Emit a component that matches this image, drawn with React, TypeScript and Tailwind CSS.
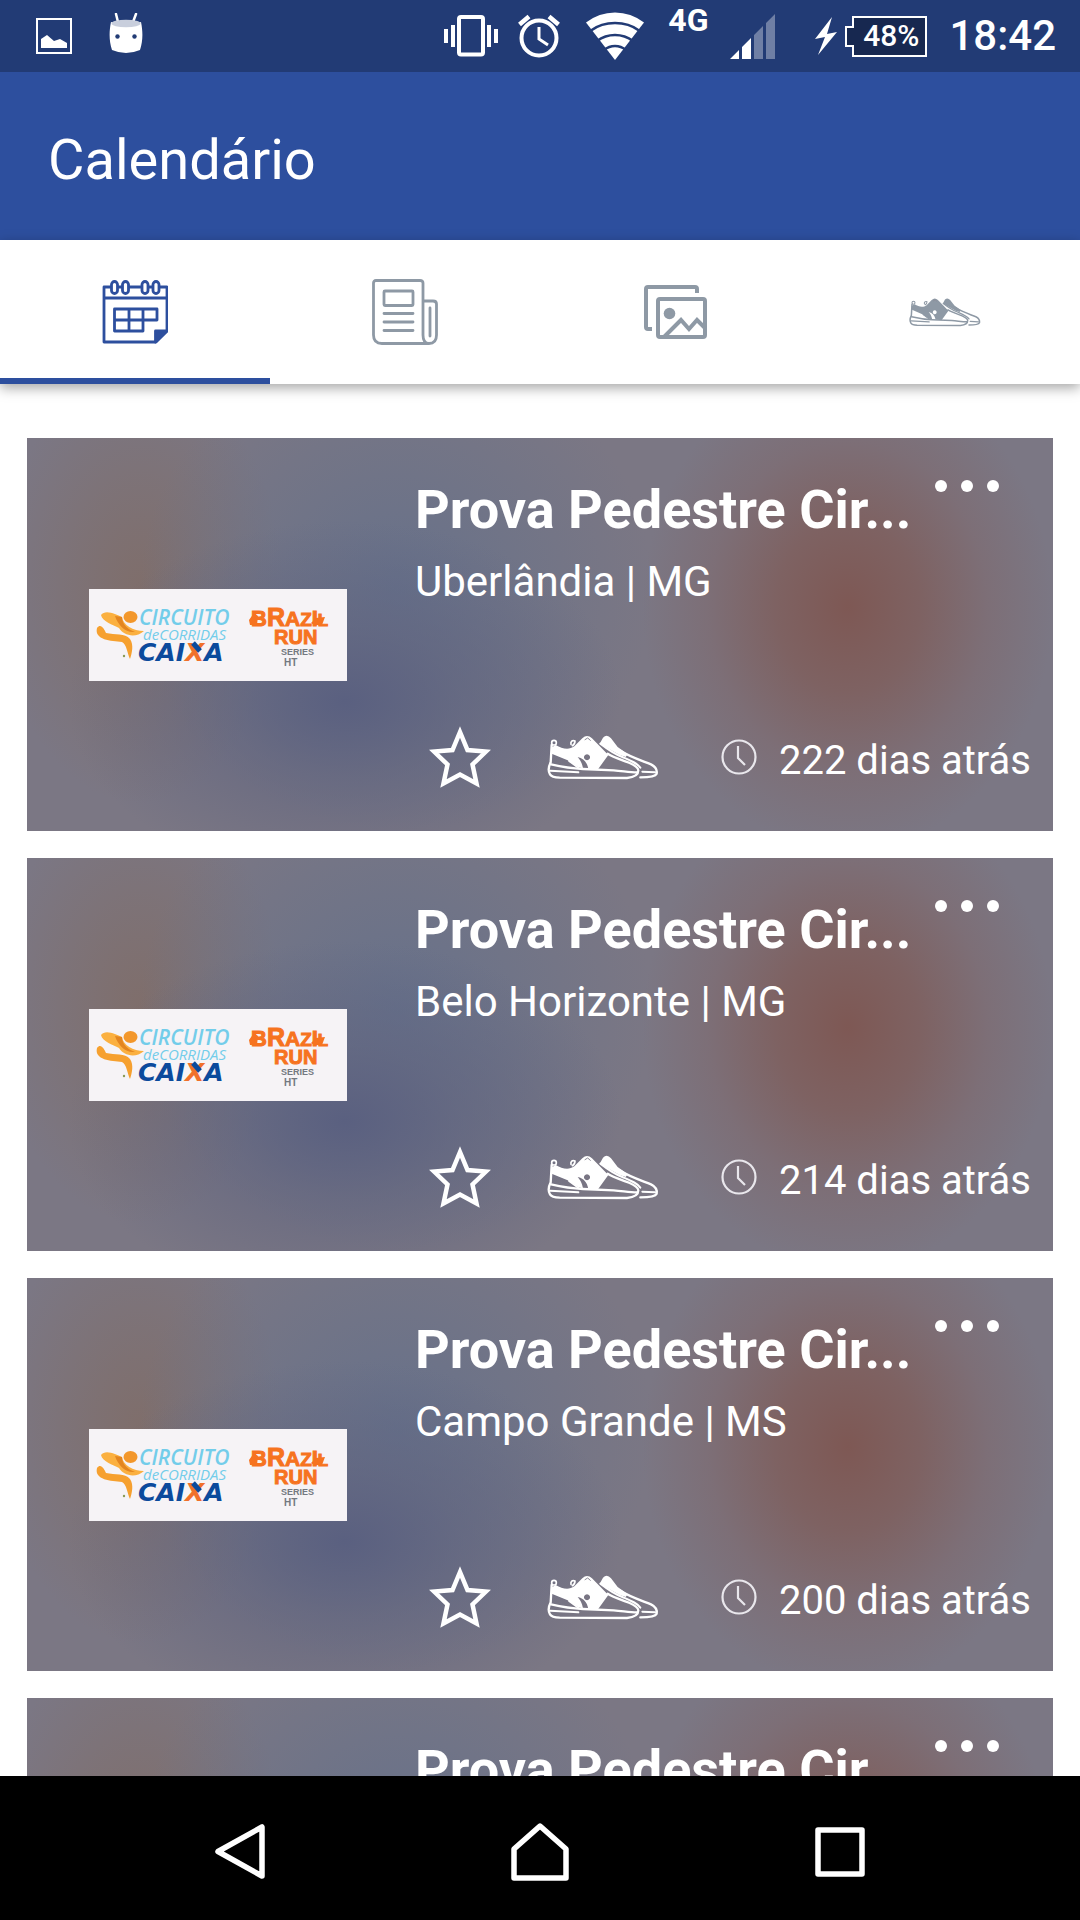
import { useState } from "react";
import type { ReactNode } from "react";

type Race = {
  id: number;
  title: string;
  place: string;
  elapsed: string;
};

const races: Race[] = [
  { id: 1, title: "Prova Pedestre Cir...", place: "Uberlândia | MG", elapsed: "222 dias atrás" },
  { id: 2, title: "Prova Pedestre Cir...", place: "Belo Horizonte | MG", elapsed: "214 dias atrás" },
  { id: 3, title: "Prova Pedestre Cir...", place: "Campo Grande | MS", elapsed: "200 dias atrás" },
  { id: 4, title: "Prova Pedestre Cir...", place: "", elapsed: "" }
];

function ShoesIcon({ className }: { className?: string }) {
  return (
    <svg viewBox="22 44 336 136" className={className} fill="none" stroke="currentColor" strokeWidth="7" strokeLinecap="round" strokeLinejoin="round">
      <path
        fill="currentColor"
        stroke="none"
        fillRule="evenodd"
        d="M34 84 L48 76 C68 88 88 92 104 80 L128 56 Q142 42 157 56 L206 106 L174 150 L146 147 C142 128 132 116 114 112 C126 126 128 136 130 146 L116 143 L84 122 L36 102 Z M142 104 a9 9 0 1 0 0.1 0 Z"
      />
      <path d="M136 60 l8 -5 l8 7" stroke="#8c8994" strokeWidth="3" />
      <circle cx="43" cy="69" r="7" strokeWidth="5" />
      <path d="M94 74 C92 66 98 60 106 64 C106 70 102 76 98 78" strokeWidth="5" />
      <path d="M36 76 L33 128 C26 142 26 156 31 164 Q36 173 60 174 L262 175 Q296 172 296 152 Q296 142 270 130 C244 120 220 112 204 102" />
      <path d="M34 134 C60 140 90 146 130 148 L222 152 C250 154 270 158 292 158" />
      <path d="M32 153 L116 158" strokeWidth="6" />
      <path d="M88 124 L118 146" strokeWidth="5" />
      <path fill="currentColor" stroke="none" d="M180 72 L190 54 Q202 42 214 56 L234 82 L264 104 L258 112 L240 106 Z" />
      <path d="M182 72 C208 92 226 104 248 112 C276 124 292 130 302 144" strokeWidth="6" />
      <path d="M240 92 C270 112 304 122 334 134 Q354 144 351 162 Q346 173 302 173" />
      <path d="M308 156 L346 158" strokeWidth="6" />
    </svg>
  );
}

function CalendarIcon() {
  return (
    <svg viewBox="0 0 66 64" className="h-16 w-[66px]" fill="none" stroke="currentColor" strokeWidth="2.8" strokeLinejoin="round">
      <path d="M9 7 H2 V62 H54 L65 51 V7 H58 M16 7 H20 M27 7 H39 M47 7 H50 M2 18 H65" />
      <path fill="currentColor" d="M53.5 62 V51 H65 Z" />
      {[9.5, 20.5, 40, 51].map((x) => (
        <rect key={x} x={x} y="1.5" width="6" height="12" rx="3" />
      ))}
      <path d="M12.5 29 H55 V40 H12.5 Z M12.5 40 V51 H41 V29 M27 29 V51" />
    </svg>
  );
}

function NewsIcon() {
  return (
    <svg viewBox="0 0 66 66" className="size-[66px]" fill="none" stroke="currentColor" strokeWidth="2.8" strokeLinecap="round" strokeLinejoin="round">
      <path d="M51 22 V4 Q51 1.5 48 1.5 H4 Q1.5 1.5 1.5 4 V56 Q1.5 64.5 10 64.5 H57 Q64.5 64.5 64.5 56 V25 Q64.5 22 61 22 H51 V56 Q51 64.5 57 64.5" />
      <rect x="12" y="12" width="29" height="14.5" rx="1" />
      <path d="M12 34.5 H41 M12 43 H41 M12 51.5 H41 M58 29 V57" />
    </svg>
  );
}

function PhotosIcon() {
  return (
    <svg viewBox="0 0 63 54" className="h-[54px] w-[63px]" fill="none" stroke="currentColor" strokeWidth="4">
      <path d="M8 44 H4 Q2 44 2 42 V4 Q2 2 4 2 H51 Q53 2 53 4 V8" />
      <rect x="14" y="14" width="47" height="38" rx="2" />
      <circle cx="25.5" cy="28.5" r="5.8" fill="currentColor" stroke="none" />
      <path d="M20 52 L37 35 L45 44 L53 35 L61 43" />
    </svg>
  );
}

function StatusBar() {
  return (
    <div className="flex h-[72px] shrink-0 items-center justify-between bg-[#223b75] pr-6 pl-9">
      <div className="flex items-center gap-9">
        <svg viewBox="0 0 36 36" className="size-9">
          <rect x="1" y="1" width="34" height="34" fill="none" stroke="#fff" strokeWidth="2" />
          <path fill="#fff" d="M5 30 V21 L11 17 L18 23 L24 21 L31 25 V30 Z" />
        </svg>
        <svg viewBox="0 0 36 42" className="mb-1 h-[42px] w-9">
          <path d="M8 1 L10 9 M28 1 L25 9" stroke="#fff" strokeWidth="2.5" strokeLinecap="round" />
          <path fill="#fff" d="M3 9 Q18 14 33 9 C35 19 35 28 32 37 Q18 43 4 37 C1 28 1 19 3 9 Z" />
          <ellipse cx="18" cy="10.5" rx="14.5" ry="3.8" fill="#c8cedc" />
          <circle cx="9.5" cy="23.5" r="2.2" fill="#223b75" />
          <circle cx="26.5" cy="23.5" r="2.2" fill="#223b75" />
        </svg>
      </div>
      <div className="flex items-center text-white">
        <svg viewBox="0 0 54 42" className="h-[42px] w-[54px]" fill="#fff">
          <rect x="15" y="2" width="24" height="37.5" rx="2" fill="none" stroke="#fff" strokeWidth="4" />
          <path d="M0 14 h4 v14 h-4z M7 10 h4 v22 h-4z M43 10 h4 v22 h-4z M50 14 h4 v14 h-4z" />
        </svg>
        <svg viewBox="0 0 42 44" className="ml-5 h-11 w-[42px]" fill="none" stroke="#fff">
          <circle cx="21" cy="24" r="17.5" strokeWidth="4" />
          <path d="M21 13 V25 L30 31" strokeWidth="3" />
          <path d="M1.5 10.5 L11 2.5 M31 2.5 L40.5 10.5" strokeWidth="4.5" />
        </svg>
        <svg viewBox="0 0 58 48" className="ml-[26px] h-12 w-[58px]">
          <path fill="#fff" d="M29 48 L0 10.5 Q13 0.5 29 0.5 T58 10.5 Z" />
          <path fill="none" stroke="#223b75" strokeWidth="2.6" d="M5 18.5 Q15 11 29 11 T53 18.5 M11 29 Q19 23 29 23 T47 29 M18 38 Q23 34 29 34 T40 38" />
        </svg>
        <span className="mb-8 ml-6 text-[32px] leading-6 font-bold">4G</span>
        <svg viewBox="0 0 45 45" className="ml-[22px] h-[45px] w-[45px]">
          <path fill="#fff" d="M0 45 L9 36 V45 Z M12 33 L21 24 V45 H12 Z" />
          <path fill="#fff" fillOpacity="0.35" d="M24 21 L33 12 V45 H24 Z M36 9 L45 0 V45 H36 Z" />
        </svg>
        <svg viewBox="0 0 22 38" className="ml-10 h-[38px] w-[22px]">
          <path fill="#fff" d="M17 0 L0 22 L10 20 L3 38 L22 15 L12 17 Z" />
        </svg>
        <div className="relative ml-2 flex h-[41px] w-[82px] items-center justify-end pr-2">
          <svg viewBox="0 0 82 41" className="absolute inset-0 h-full w-full">
            <path fill="#172850" stroke="#fff" strokeWidth="2" d="M8 1 H81 V40 H8 V30 H1 V11 H8 Z" />
          </svg>
          <span className="relative text-[30px] leading-8 font-medium">48%</span>
        </div>
        <span className="ml-[22px] text-[42px] leading-[44px] font-medium">18:42</span>
      </div>
    </div>
  );
}

const tabs: { name: string; icon: ReactNode }[] = [
  { name: "Calendário", icon: <CalendarIcon /> },
  { name: "Notícias", icon: <NewsIcon /> },
  { name: "Fotos", icon: <PhotosIcon /> },
  { name: "Corridas", icon: <ShoesIcon className="h-[30px] w-[72px]" /> }
];

function EventLogo() {
  return (
    <svg viewBox="0 0 258 92" className="h-[92px] w-[258px] bg-[#f6f3f6]" role="img" aria-label="Circuito de Corridas Caixa, Brazil Run Series">
      <path fill="#fbb040" d="M12 26 C16 20 27 25 33 28 C34 36 44 42 55 42 C46 50 34 46 30 39 C24 36 13 32 12 26 Z" />
      <path fill="#f6a02f" d="M8 39 C12 34 15 40 17 44 C26 46 36 44 41 50 C45 56 43 64 41 70 C38 64 38 56 33 53 C22 52 5 51 8 39 Z" />
      <path fill="#e38520" d="M26 27 L33 28 C33 36 40 41 46 43 C36 44 29 36 26 27 Z" />
      <ellipse cx="41.5" cy="28" rx="7" ry="6" fill="#f3972b" />
      <circle cx="35" cy="67" r="1.2" fill="#8a9a55" />
      <g fontStyle="italic">
        <text x="50" y="36" fontFamily="'Open Sans', sans-serif" fontSize="21" fontWeight="600" fill="#73cdea">CIRCUITO</text>
        <text x="54" y="51" fontFamily="'Open Sans', sans-serif" fontSize="15" fill="#73cdea">deCORRIDAS</text>
        <text x="49" y="72" fontFamily="'DejaVu Sans', sans-serif" fontSize="25" fontWeight="700" fill="#0b4a9c">
          CAI<tspan fill="#f0702a">X</tspan>A
        </text>
      </g>
      <path stroke="#0b4a9c" strokeWidth="5" d="M104 54 L111 62" />
      <g fontFamily="'Liberation Sans', sans-serif" fontWeight="700" fill="#f6731f" stroke="#f6731f">
        <path stroke="none" d="M160 31 l5 -7 l4 3 l-1 9 h-7 z M222 34 l5 -5 l9 -1 l-3 8 h-8 z" />
        <text x="162" y="37" strokeWidth="1">
          <tspan fontSize="22">B</tspan>
          <tspan fontSize="25">R</tspan>
          <tspan fontSize="21">A</tspan>
          <tspan fontSize="19">Z</tspan>
          <tspan fontSize="22">I</tspan>
          <tspan fontSize="17">L</tspan>
        </text>
        <text x="185" y="55" fontSize="20" strokeWidth="1">RUN</text>
        <text x="192" y="66" fontSize="9" fill="#737880" stroke="none">SERIES</text>
        <text x="195" y="77" fontSize="10" fill="#737880" stroke="none">HT</text>
      </g>
    </svg>
  );
}

function RaceCard({ race }: { race: Race }) {
  const [starred, setStarred] = useState(false);

  return (
    <article className="flex h-[393px] shrink-0 bg-[#7b7784] bg-[radial-gradient(ellipse_20%_62%_at_80%_43%,#7e5854_0%,#7f5b57c0_35%,#80616160_68%,#7b778400_100%),radial-gradient(ellipse_27%_46%_at_31%_67%,#5a6080_0%,#5d627f90_42%,#7b778400_100%),radial-gradient(ellipse_25%_62%_at_36%_38%,#67718a_0%,#69728990_50%,#7b778400_100%),radial-gradient(ellipse_14%_55%_at_11%_38%,#7f6e6b_0%,#7f6f6d90_50%,#7b778400_100%)]">
      <div className="flex w-[388px] shrink-0 items-center pl-[62px]">
        <EventLogo />
      </div>
      <div className="flex min-w-0 flex-1 flex-col pt-10 pb-[42px]">
        <div className="flex items-start justify-between pr-[54px]">
          <h2 className="truncate text-[54px] leading-[64px] font-bold">{race.title}</h2>
          <button type="button" aria-label="Mais opções" className="flex shrink-0 gap-[14px] pt-0.5">
            <span className="size-3 rounded-full bg-white" />
            <span className="size-3 rounded-full bg-white" />
            <span className="size-3 rounded-full bg-white" />
          </button>
        </div>
        <p className="mt-3 text-[42px] leading-[56px]">{race.place}</p>
        <div className="mt-auto flex items-center pr-[22px] pl-3.5">
          <button type="button" aria-label="Favoritar" aria-pressed={starred} onClick={() => setStarred(!starred)}>
            <svg viewBox="0 0 62 64" className="h-16 w-[62px]" fill={starred ? "#fff" : "none"} stroke="#fff" strokeWidth="4.5">
              <path d="M31 7 L38.5 25 L57 26.5 L43.5 39.500 L47.5 58.5 L31 49.5 L14.5 58.5 L18.5 39.5 L5 26.5 L23.5 25 Z" />
            </svg>
          </button>
          <button type="button" aria-label="Participar" className="ml-14">
            <ShoesIcon className="h-[46px] w-[112px]" />
          </button>
          <div className="ml-auto flex items-center gap-[22px]">
            <svg viewBox="0 0 36 36" className="size-9" fill="none" stroke="#e9e7ec" strokeWidth="2.2">
              <circle cx="18" cy="18" r="16.5" />
              <path d="M17 7 V19 L24 26" />
            </svg>
            <span className="pt-2 text-[40px] leading-[56px]">{race.elapsed}</span>
          </div>
        </div>
      </div>
    </article>
  );
}

export default function App() {
  const [active, setActive] = useState(0);

  return (
    <div className="flex h-screen flex-col overflow-hidden bg-white font-['Roboto',sans-serif] text-white">
      <StatusBar />
      <header className="flex h-[168px] shrink-0 items-center bg-[#2d4f9e] px-12">
        <h1 className="pt-2 text-[56px] leading-[72px]">Calendário</h1>
      </header>
      <nav className="relative z-10 grid h-36 shrink-0 grid-cols-4 bg-white shadow-[0_4px_12px_rgba(0,0,0,0.35)]">
        {tabs.map((tab, i) => (
          <button
            key={tab.name}
            type="button"
            aria-label={tab.name}
            onClick={() => setActive(i)}
            className={`flex items-center justify-center border-y-[6px] border-t-transparent ${
              active === i ? "border-b-[#2d4f9e] text-[#2d4f9e]" : "border-b-transparent text-[#8e99a5]"
            }`}
          >
            {tab.icon}
          </button>
        ))}
      </nav>
      <main className="flex min-h-0 flex-1 flex-col gap-[27px] overflow-y-auto px-[27px] pt-[54px] [scrollbar-width:none]">
        {races.map((race) => (
          <RaceCard key={race.id} race={race} />
        ))}
      </main>
      <footer className="flex h-36 shrink-0 items-center justify-between bg-black px-[210px] pt-2">
        <button type="button" aria-label="Voltar" className="flex w-[60px] justify-center">
          <svg viewBox="0 0 54 60" className="h-[60px] w-[54px]" fill="none" stroke="#fff" strokeWidth="5.5" strokeLinejoin="round">
            <path d="M49 5 V54 L5 29.5 Z" />
          </svg>
        </button>
        <button type="button" aria-label="Início" className="flex w-[60px] justify-center">
          <svg viewBox="0 0 60 60" className="size-[60px]" fill="none" stroke="#fff" strokeWidth="5.5" strokeLinejoin="round">
            <path d="M30 4 L56 27 V56 H4 V27 Z" />
          </svg>
        </button>
        <button type="button" aria-label="Recentes" className="flex w-[60px] justify-center">
          <svg viewBox="0 0 50 50" className="size-[50px]" fill="none" stroke="#fff" strokeWidth="5.5" strokeLinejoin="round">
            <rect x="3" y="3" width="44" height="44" />
          </svg>
        </button>
      </footer>
    </div>
  );
}
